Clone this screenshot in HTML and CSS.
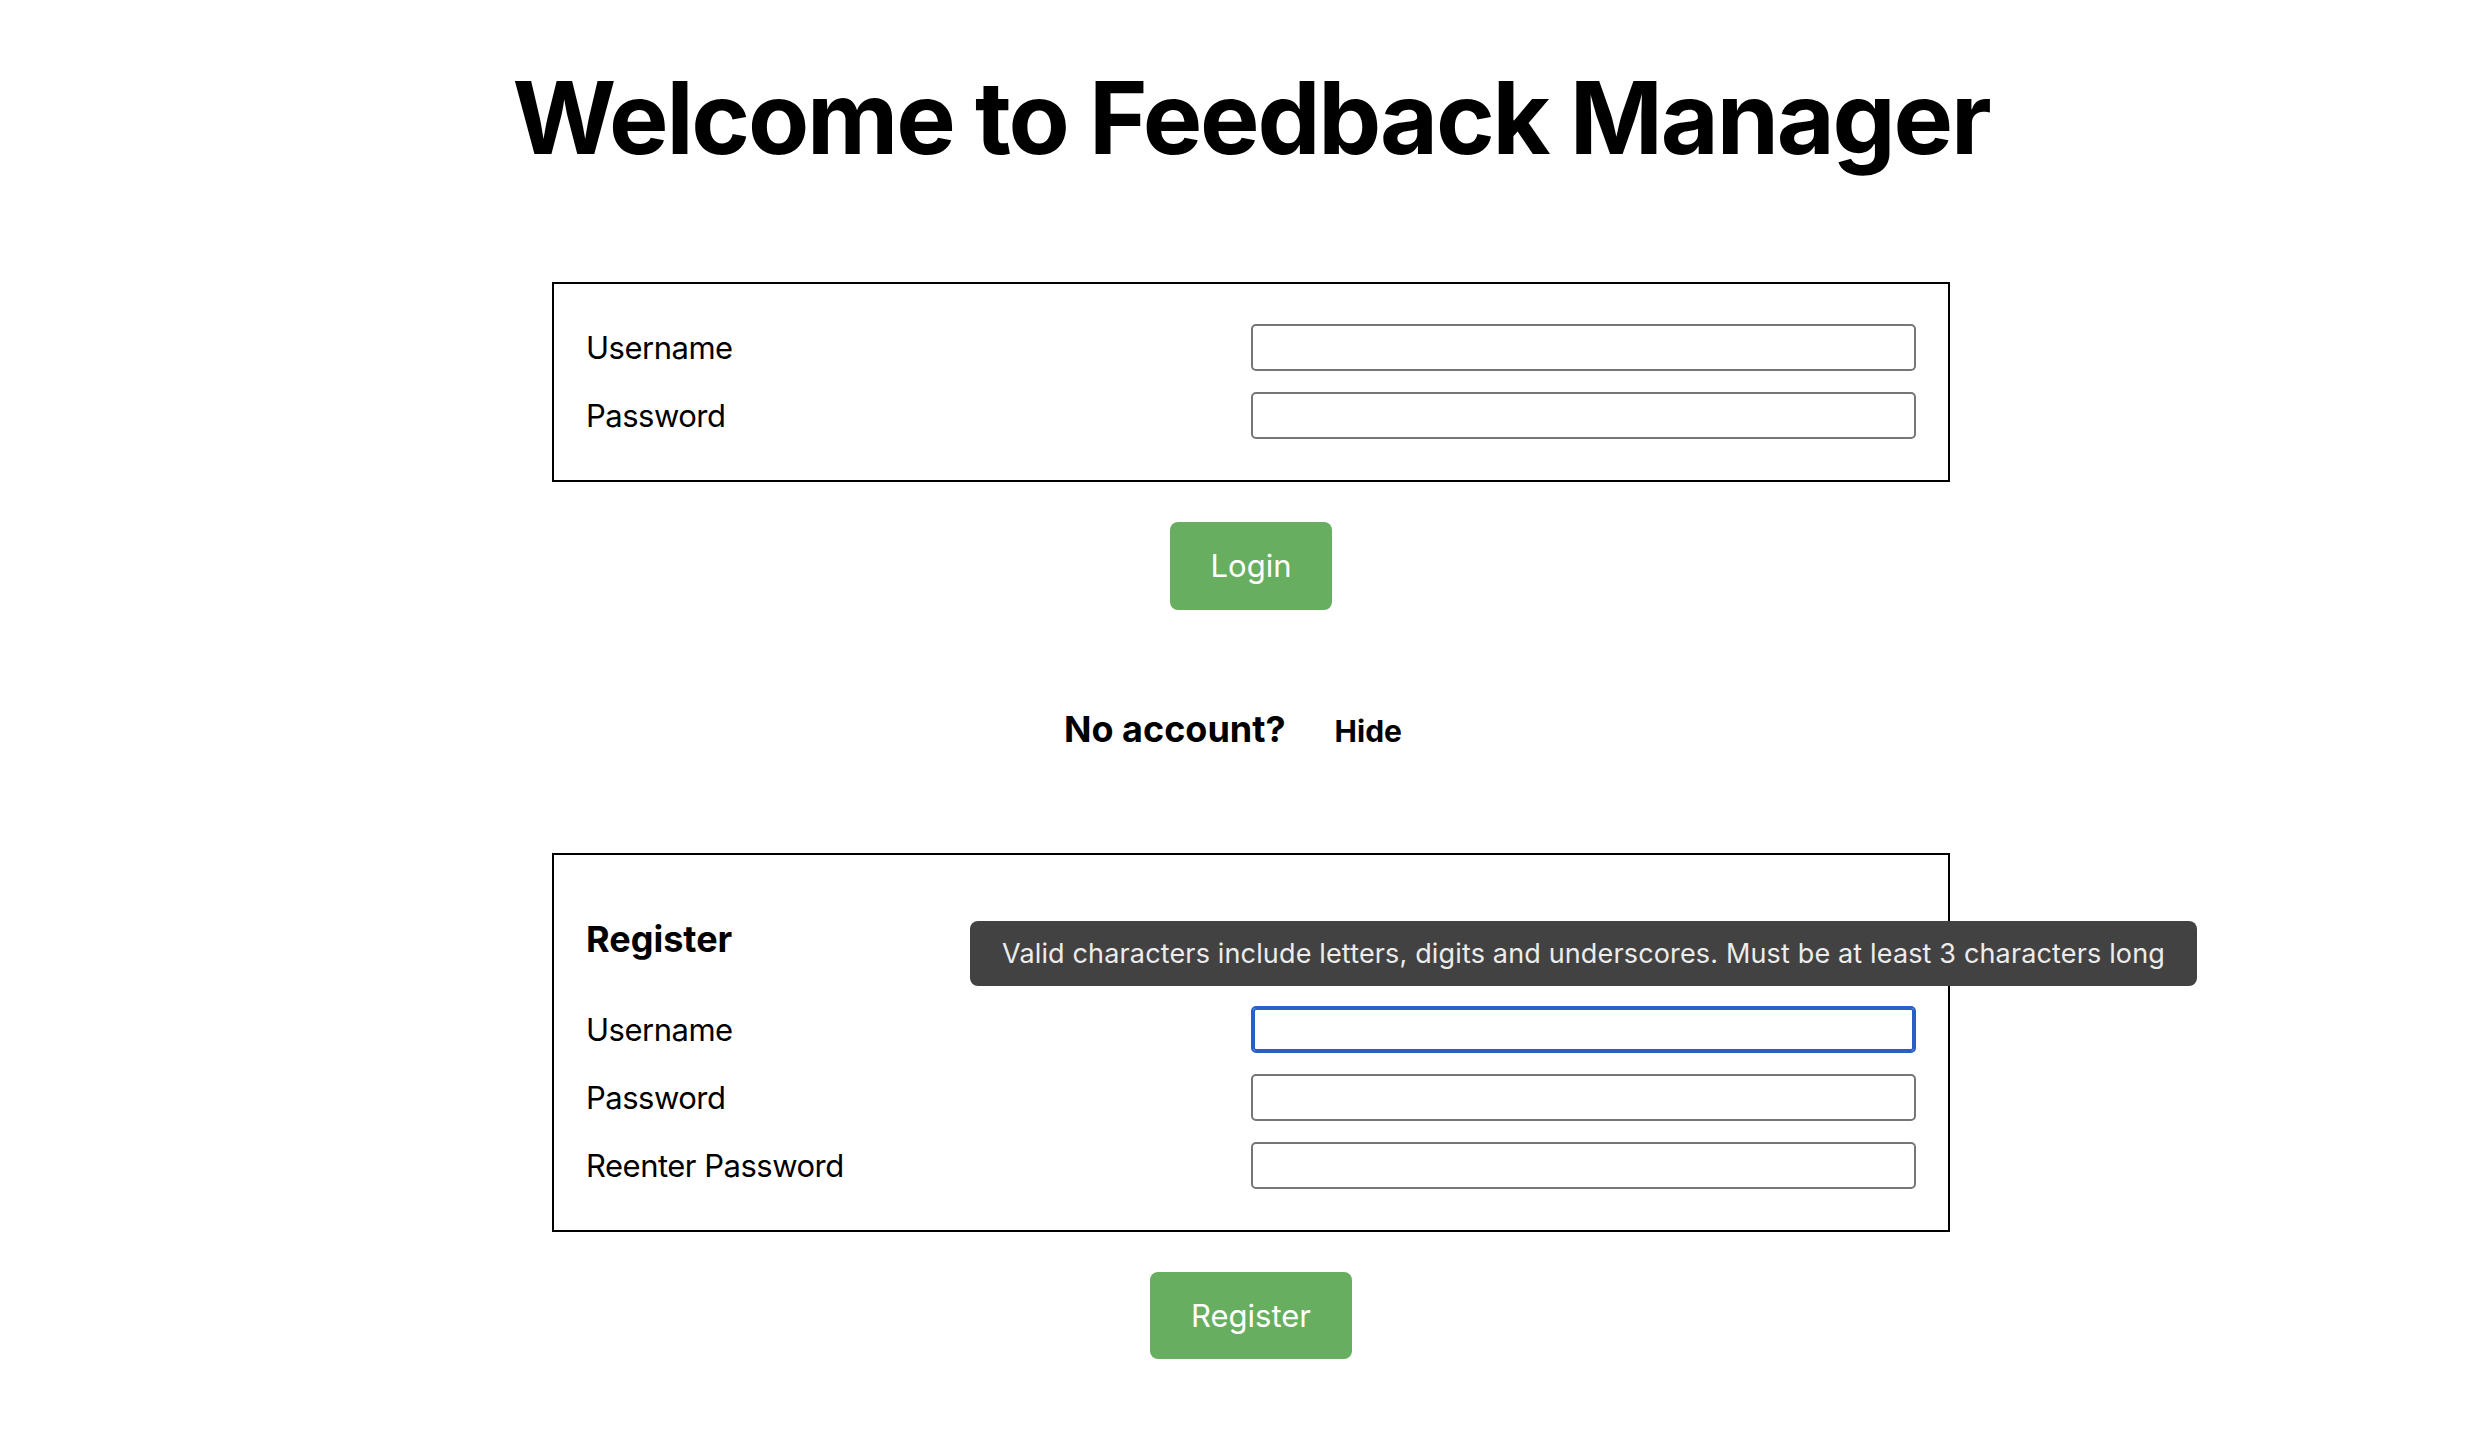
FILE: index.html
```html
<!DOCTYPE html>
<html lang="en">
<head>
<meta charset="utf-8">
<title>Feedback Manager</title>
<link rel="stylesheet" href="styles.css">
</head>
<body>
<h1 class="title">Welcome to Feedback Manager</h1>

<form class="form">
  <div class="panel">
    <div class="fields">
      <label class="label" for="lu">Username</label>
      <input class="input" id="lu" type="text">
      <label class="label" for="lp">Password</label>
      <input class="input" id="lp" type="password">
    </div>
  </div>
  <button class="btn" type="button">Login</button>
</form>

<div class="toggle-row">
  <h3 class="toggle-title">No account?</h3>
  <button class="link-btn" type="button">Hide</button>
</div>

<form class="form">
  <div class="panel panel-register">
    <h3 class="panel-title">Register</h3>
    <div class="fields">
      <label class="label" for="ru">Username</label>
      <input class="input input-focus" id="ru" type="text">
      <label class="label" for="rp">Password</label>
      <input class="input" id="rp" type="password">
      <label class="label" for="rr">Reenter Password</label>
      <input class="input" id="rr" type="password">
    </div>
    <div class="tooltip">Valid characters include letters, digits and underscores. Must be at least 3 characters long</div>
  </div>
  <button class="btn btn-register" type="button">Register</button>
</form>
</body>
</html>
```

FILE: styles.css
```css
* {
  box-sizing: border-box;
}

html, body {
  background: #ffffff;
}

body {
  margin: 0;
  padding: 0 0 0 24px;
  font-family: Inter, "Noto Sans", "Liberation Sans", sans-serif;
  color: #000;
}

.title {
  margin: 58px 0 0;
  font-size: 100px;
  line-height: 120px;
  font-weight: 700;
  text-align: center;
  letter-spacing: -2.2px;
}

.form {
  width: 1398px;
  margin: 104px auto 0;
  display: flex;
  flex-direction: column;
  align-items: center;
}

.panel {
  position: relative;
  width: 100%;
  border: 2px solid #000;
  padding: 40px 32px 41px;
}

.fields {
  display: grid;
  grid-template-columns: 1fr 1fr;
  row-gap: 21px;
  align-items: center;
}

.label {
  font-size: 31px;
  line-height: 40px;
  letter-spacing: -0.5px;
}

.input {
  display: block;
  width: 100%;
  height: 47px;
  border: 2px solid #767676;
  border-radius: 5px;
  background: #fff;
  margin: 0;
  padding: 0 6px;
  font: inherit;
}

.input-focus {
  border-color: #2b5fc8;
  box-shadow: inset 0 0 0 2px #2b5fc8;
  outline: none;
}

.btn {
  margin-top: 40px;
  height: 88px;
  padding: 0 41px;
  border: none;
  border-radius: 8px;
  background: #68ae60;
  color: #fff;
  font-family: inherit;
  font-size: 31px;
  line-height: 40px;
}

.btn-register {
  height: 87px;
}

.toggle-row {
  margin-top: 98px;
  display: flex;
  justify-content: center;
  align-items: baseline;
  gap: 13px;
}

.toggle-title {
  margin: 0;
  font-size: 36px;
  line-height: 43px;
  font-weight: 700;
}

.link-btn {
  border: none;
  background: none;
  padding: 0 36px;
  font-family: inherit;
  font-size: 30px;
  font-weight: 700;
  color: #000;
}

.form + .toggle-row + .form {
  margin-top: 102px;
}

.panel-title {
  margin: 23px 0 45px;
  font-size: 36px;
  line-height: 43px;
  font-weight: 700;
}

.tooltip {
  position: absolute;
  left: 416px;
  top: 66px;
  height: 65px;
  padding: 0 32px;
  border-radius: 8px;
  background: #424242;
  color: #ececec;
  font-size: 27px;
  line-height: 65px;
  letter-spacing: 0.15px;
  white-space: nowrap;
}
```
